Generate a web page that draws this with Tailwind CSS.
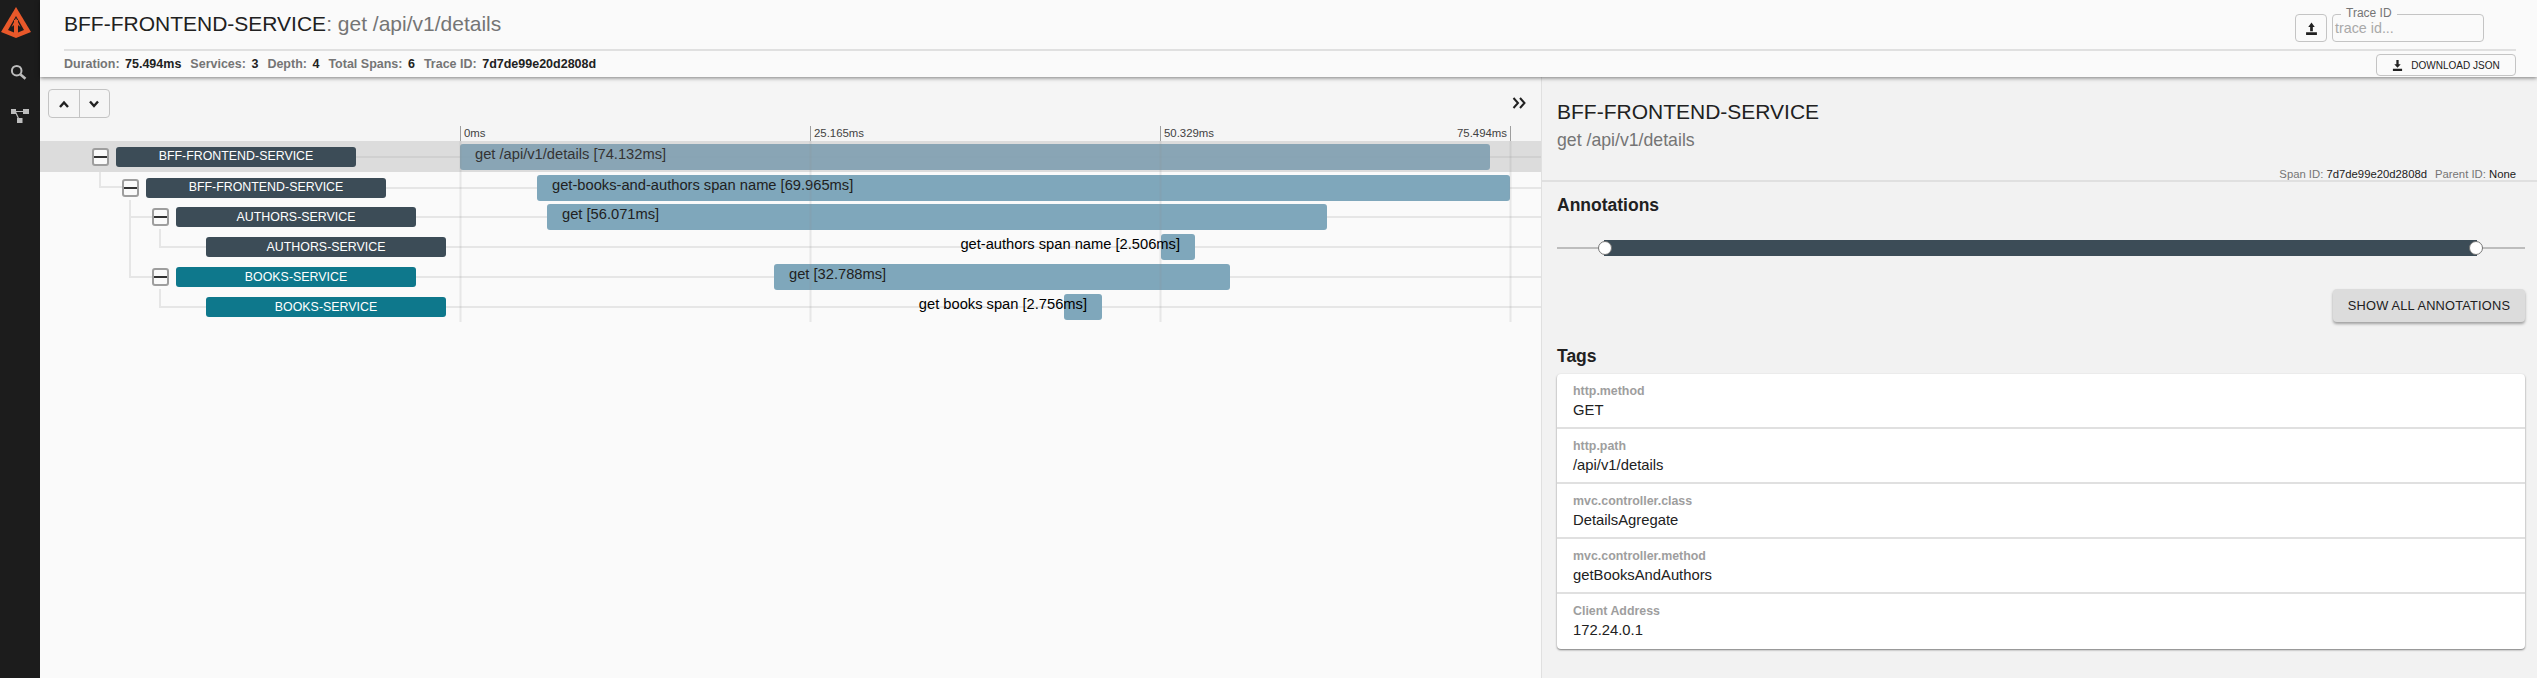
<!DOCTYPE html>
<html lang="en">
<head>
  <meta charset="UTF-8" />
  <title>Zipkin</title>
  <script src="https://cdn.jsdelivr.net/npm/@tailwindcss/browser@4"></script>
</head>
<body class="h-[678px] w-[2537px] overflow-hidden bg-[#fafafa] font-['Liberation_Sans',Arial,sans-serif] text-[#212121]">
<div class="flex h-[678px]">

  <!-- Sidebar -->
  <aside class="flex w-[40px] shrink-0 flex-col items-center bg-[#1c1c1c] pt-[7px]">
    <svg class="mr-[6px] h-[31px] w-[32px]" viewBox="0 0 32 31">
      <path d="M15 0 L30 25 L15 31 L0 25 Z" fill="#e8582a"/>
      <path d="M15 9 L23 23 L17 25.5 L17 13 L13 13 L13 25.5 L7 23 Z" fill="#1c1c1c"/>
      <path d="M15 11 L19.5 20 L16.2 17.5 L16.2 30 L13.8 30 L13.8 17.5 L10.5 20 Z" fill="#e8582a"/>
    </svg>
    <svg class="mt-[24px] h-[20px] w-[20px]" viewBox="0 0 20 20" fill="none" stroke="#bdbdbd">
      <circle cx="6.700" cy="8.700" r="4.800" stroke-width="2"/>
      <path d="M10.500 12.500 L15.500 16.800" stroke-width="2.600"/>
    </svg>
    <svg class="mt-[27px] h-[14px] w-[18px]" viewBox="0 0 18 14" fill="#bdbdbd">
      <rect x="0" y="0" width="5" height="5"/>
      <rect x="12" y="0" width="6" height="5"/>
      <rect x="6" y="9" width="5.500" height="5"/>
      <path d="M5 2.500 H12 M4.500 3 L7.500 9.500" stroke="#bdbdbd" stroke-width="1.200" fill="none"/>
    </svg>
  </aside>

  <div class="flex min-w-0 flex-1 flex-col">
    <!-- Header -->
    <header class="relative z-10 h-[77px] shrink-0 bg-[#fafafa] pr-[21px] pl-[24px] shadow-[0_1px_4px_rgba(0,0,0,0.5)]">
      <div class="flex h-[51px] items-start justify-between border-b-2 border-[#e0e0e0]">
        <h1 class="mt-[9px] text-[21px] leading-[30px] font-normal">BFF-FRONTEND-SERVICE<span class="text-[#757575]">: get /api/v1/details</span></h1>
        <div class="mt-[14px] flex gap-[5px] pr-[32px]">
          <button class="flex h-[28px] w-[32px] items-center justify-center rounded border border-[#c4c4c4]">
            <svg class="h-[13px] w-[13px]" viewBox="0 0 24 24" fill="#212121"><path d="M12 1 L18 9 H14.500 V17 H9.500 V9 H6 Z M2 19 H22 V24 H2 Z"/></svg>
          </button>
          <div class="relative h-[28px] w-[152px] rounded border border-[#c4c4c4] px-[2px] text-[14.300px] leading-[26px] text-[#a9a9a9]">
            <span class="absolute -top-[8px] left-[8px] bg-[#fafafa] px-[5px] text-[12px] leading-[13px] text-[#757575]">Trace ID</span>
            trace id...
          </div>
        </div>
      </div>
      <div class="flex h-[26px] items-center justify-between">
        <div class="flex gap-[9px] text-[12.500px] font-bold text-[#757575]">
          <span>Duration: <span class="ml-[2px] text-[#212121]">75.494ms</span></span>
          <span>Services: <span class="ml-[2px] text-[#212121]">3</span></span>
          <span>Depth: <span class="ml-[2px] text-[#212121]">4</span></span>
          <span>Total Spans: <span class="ml-[2px] text-[#212121]">6</span></span>
          <span>Trace ID: <span class="ml-[2px] text-[#212121]">7d7de99e20d2808d</span></span>
        </div>
        <button class="mt-[3px] flex h-[22px] w-[140px] items-center justify-center gap-[8px] self-start rounded border border-[#c4c4c4] text-[10px] text-[#212121]">
          <svg class="h-[11px] w-[11px]" viewBox="0 0 24 24" fill="#212121"><path d="M9.500 0 H14.500 V9 H19 L12 17 L5 9 H9.500 Z M2 19 H22 V24 H2 Z"/></svg>
          DOWNLOAD JSON
        </button>
      </div>
    </header>

    <div class="flex min-h-0 flex-1">
      <!-- Timeline -->
      <main class="relative w-[1501px] shrink-0 bg-[#fafafa]">
        <div class="flex h-[49px] items-start justify-between bg-[#f5f5f5] pt-[12px] pr-[15px] pl-[8px]">
          <div class="flex h-[29px] w-[62px] rounded border border-[#c4c4c4]">
            <span class="flex flex-1 items-center justify-center border-r border-[#c4c4c4]">
              <svg class="h-[12px] w-[12px]" viewBox="0 0 12 12" fill="none" stroke="#212121" stroke-width="2.400"><path d="M2 9 L6 4.500 L10 9"/></svg>
            </span>
            <span class="flex flex-1 items-center justify-center">
              <svg class="h-[12px] w-[12px]" viewBox="0 0 12 12" fill="none" stroke="#212121" stroke-width="2.400"><path d="M2 3.500 L6 8 L10 3.500"/></svg>
            </span>
          </div>
          <svg class="mt-[8px] h-[12px] w-[14px]" viewBox="0 0 14 12" fill="none" stroke="#212121" stroke-width="2"><path d="M1.500 1 L6 6 L1.500 11 M8 1 L12.500 6 L8 11"/></svg>
        </div>
        <!-- Time ticks -->
        <div class="flex h-[15px] bg-[#f5f5f5] pl-[420px]">
          <div class="flex w-[1051px] justify-between text-[11.400px] leading-[15px] text-[#424242]">
            <span class="h-[15px] w-[350px] border-l border-[#9e9e9e] pl-[3px]">0ms</span>
            <span class="h-[15px] w-[350px] border-l border-[#9e9e9e] pl-[3px]">25.165ms</span>
            <span class="flex h-[15px] w-[351px] justify-between border-x border-[#9e9e9e] pr-[3px] pl-[3px]"><span>50.329ms</span><span>75.494ms</span></span>
          </div>
        </div>

        <!-- Grid lines and tree connectors, drawn over the rows -->
        <svg class="pointer-events-none absolute top-[64px] left-0 z-10 h-[181px] w-[1501px]" viewBox="0 0 1501 181" fill="none">
          <g stroke="#909090" stroke-opacity="0.18" stroke-width="2">
            <path d="M420.500 0 V181 M770.500 0 V181 M1120.500 0 V181 M1470.500 0 V181"/>
          </g>
          <g stroke="#e6e6e6" stroke-width="2">
            <path d="M60 31 V46 H82 M90 59 V136 H112 M90 76 H112 M120 88 V106 H166 M120 148 V166 H166"/>
          </g>
        </svg>

        <!-- Span rows -->
        <div class="relative">
          <div class="relative flex h-[31px] items-center bg-[#dcdcdc]">
            <div class="flex w-[420px] shrink-0 items-center pl-[52px]">
              <span class="flex h-[18px] w-[17px] flex-col items-center justify-center rounded-[3px] border-2 border-[#9e9e9e] bg-[#fafafa]"><span class="h-[2px] w-full bg-[#333]"></span></span>
              <span class="ml-[7px] flex h-[20px] w-[240px] items-center justify-center rounded-[3px] bg-[#3c4c57] text-[12.400px] text-white">BFF-FRONTEND-SERVICE</span>
            </div>
            <div class="pointer-events-none absolute top-[15px] right-0 left-[316px] h-[2px] bg-[#d0d0d0]"></div>
            <div class="relative h-[26px] w-[1030px] rounded-[3px] bg-[#7f9fb0]/90 pl-[15px] text-[14.700px] leading-[20px] text-[#333]">get /api/v1/details [74.132ms]</div>
          </div>
          <div class="relative flex h-[30px] items-center pt-[1px]">
            <div class="flex w-[420px] shrink-0 items-center pl-[82px]">
              <span class="flex h-[18px] w-[17px] flex-col items-center justify-center rounded-[3px] border-2 border-[#9e9e9e] bg-[#fafafa]"><span class="h-[2px] w-full bg-[#333]"></span></span>
              <span class="ml-[7px] flex h-[20px] w-[240px] items-center justify-center rounded-[3px] bg-[#3c4c57] text-[12.400px] text-white">BFF-FRONTEND-SERVICE</span>
            </div>
            <div class="pointer-events-none absolute top-[15px] right-0 left-[346px] h-[2px] bg-[#e6e6e6]"></div>
            <div class="relative ml-[77px] h-[26px] w-[973px] rounded-[3px] bg-[#7fa7bb] pl-[15px] text-[14.700px] leading-[20px] text-[#212121]">get-books-and-authors span name [69.965ms]</div>
          </div>
          <div class="relative flex h-[30px] items-center">
            <div class="flex w-[420px] shrink-0 items-center pl-[112px]">
              <span class="flex h-[18px] w-[17px] flex-col items-center justify-center rounded-[3px] border-2 border-[#9e9e9e] bg-[#fafafa]"><span class="h-[2px] w-full bg-[#333]"></span></span>
              <span class="ml-[7px] flex h-[20px] w-[240px] items-center justify-center rounded-[3px] bg-[#3c4c57] text-[12.400px] text-white">AUTHORS-SERVICE</span>
            </div>
            <div class="pointer-events-none absolute top-[14px] right-0 left-[376px] h-[2px] bg-[#e6e6e6]"></div>
            <div class="relative ml-[87px] h-[26px] w-[780px] rounded-[3px] bg-[#7fa7bb] pl-[15px] text-[14.700px] leading-[20px] text-[#212121]">get [56.071ms]</div>
          </div>
          <div class="relative flex h-[30px] items-center">
            <div class="flex w-[420px] shrink-0 items-center pl-[166px]">
              <span class="flex h-[20px] w-[240px] items-center justify-center rounded-[3px] bg-[#3c4c57] text-[12.400px] text-white">AUTHORS-SERVICE</span>
            </div>
            <div class="pointer-events-none absolute top-[14px] right-0 left-[406px] h-[2px] bg-[#e6e6e6]"></div>
            <div class="relative ml-[701px] h-[26px] w-[34px] rounded-[3px] bg-[#7fa7bb] text-[14.700px] leading-[20px] text-black"><span class="absolute right-[15px] whitespace-nowrap">get-authors span name [2.506ms]</span></div>
          </div>
          <div class="relative flex h-[30px] items-center">
            <div class="flex w-[420px] shrink-0 items-center pl-[112px]">
              <span class="flex h-[18px] w-[17px] flex-col items-center justify-center rounded-[3px] border-2 border-[#9e9e9e] bg-[#fafafa]"><span class="h-[2px] w-full bg-[#333]"></span></span>
              <span class="ml-[7px] flex h-[20px] w-[240px] items-center justify-center rounded-[3px] bg-[#0e788c] text-[12.400px] text-white">BOOKS-SERVICE</span>
            </div>
            <div class="pointer-events-none absolute top-[14px] right-0 left-[376px] h-[2px] bg-[#e6e6e6]"></div>
            <div class="relative ml-[314px] h-[26px] w-[456px] rounded-[3px] bg-[#7fa7bb] pl-[15px] text-[14.700px] leading-[20px] text-[#212121]">get [32.788ms]</div>
          </div>
          <div class="relative flex h-[30px] items-center">
            <div class="flex w-[420px] shrink-0 items-center pl-[166px]">
              <span class="flex h-[20px] w-[240px] items-center justify-center rounded-[3px] bg-[#0e788c] text-[12.400px] text-white">BOOKS-SERVICE</span>
            </div>
            <div class="pointer-events-none absolute top-[14px] right-0 left-[406px] h-[2px] bg-[#e6e6e6]"></div>
            <div class="relative ml-[604px] h-[26px] w-[38px] rounded-[3px] bg-[#7fa7bb] text-[14.700px] leading-[20px] text-black"><span class="absolute right-[15px] whitespace-nowrap">get books span [2.756ms]</span></div>
          </div>
        </div>
      </main>

      <!-- Span detail panel -->
      <section class="min-w-0 flex-1 border-l border-[#e0e0e0] bg-[#f2f2f2]">
        <div class="h-[105px] border-b-2 border-[#e0e0e0] pt-[21px] pr-[21px] pl-[15px]">
          <h2 class="text-[21px] leading-[28px] font-normal">BFF-FRONTEND-SERVICE</h2>
          <p class="mt-[2px] text-[17.700px] leading-[24px] text-[#757575]">get /api/v1/details</p>
          <p class="mt-[15px] text-right text-[11.300px] leading-[14px] text-[#757575]">Span ID: <span class="text-[#212121]">7d7de99e20d2808d</span><span class="ml-[8px]">Parent ID: </span><span class="text-[#212121]">None</span></p>
        </div>
        <div class="pr-[12px] pl-[15px]">
          <h3 class="mt-[12px] text-[17.500px] leading-[22px] font-bold">Annotations</h3>
          <div class="relative mt-[24px] flex h-[16px] items-center">
            <div class="h-[2px] w-full bg-[#bdbdbd]"></div>
            <div class="absolute inset-y-0 right-[48px] left-[47px] bg-[#3c4c57]"></div>
            <span class="absolute left-[41px] h-[14px] w-[14px] rounded-full border border-[#757575] bg-white"></span>
            <span class="absolute right-[42px] h-[14px] w-[14px] rounded-full border border-[#757575] bg-white"></span>
          </div>
          <div class="mt-[33px] flex justify-end">
            <button class="h-[33px] w-[192px] rounded bg-[#dcdcdc] text-[12.800px] tracking-[0.2px] text-[#212121] shadow-[0_2px_3px_rgba(0,0,0,0.35)]">SHOW ALL ANNOTATIONS</button>
          </div>
          <h3 class="mt-[23px] text-[17.500px] leading-[22px] font-bold">Tags</h3>
          <div class="mt-[7px] rounded bg-white shadow-[0_1px_2px_rgba(0,0,0,0.5)]">
            <div class="h-[55px] border-b-2 border-[#e0e0e0] pt-[9px] pl-[16px]">
              <div class="text-[12.400px] leading-[16px] font-bold text-[#9e9e9e]">http.method</div>
              <div class="mt-[1px] text-[14.800px] leading-[20px]">GET</div>
            </div>
            <div class="h-[55px] border-b-2 border-[#e0e0e0] pt-[9px] pl-[16px]">
              <div class="text-[12.400px] leading-[16px] font-bold text-[#9e9e9e]">http.path</div>
              <div class="mt-[1px] text-[14.800px] leading-[20px]">/api/v1/details</div>
            </div>
            <div class="h-[55px] border-b-2 border-[#e0e0e0] pt-[9px] pl-[16px]">
              <div class="text-[12.400px] leading-[16px] font-bold text-[#9e9e9e]">mvc.controller.class</div>
              <div class="mt-[1px] text-[14.800px] leading-[20px]">DetailsAgregate</div>
            </div>
            <div class="h-[55px] border-b-2 border-[#e0e0e0] pt-[9px] pl-[16px]">
              <div class="text-[12.400px] leading-[16px] font-bold text-[#9e9e9e]">mvc.controller.method</div>
              <div class="mt-[1px] text-[14.800px] leading-[20px]">getBooksAndAuthors</div>
            </div>
            <div class="h-[55px] pt-[9px] pl-[16px]">
              <div class="text-[12.400px] leading-[16px] font-bold text-[#9e9e9e]">Client Address</div>
              <div class="mt-[1px] text-[14.800px] leading-[20px]">172.24.0.1</div>
            </div>
          </div>
        </div>
      </section>
    </div>
  </div>
</div>
</body>
</html>
